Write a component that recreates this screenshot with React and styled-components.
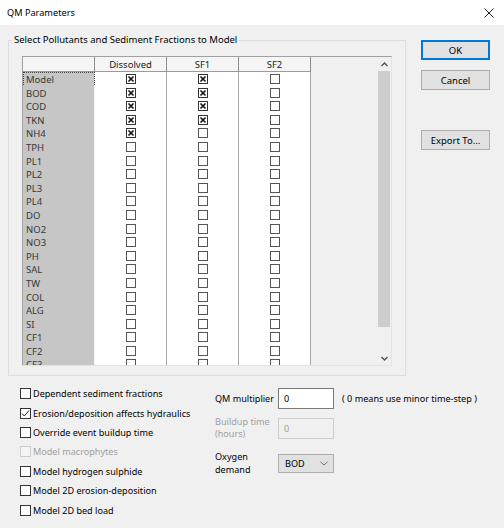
import React from "react";
import styled, { createGlobalStyle } from "styled-components";

const Global = createGlobalStyle`
  html, body { margin: 0; padding: 0; background: #f0f0f0; }
  body { font-family: "Noto Sans", "Open Sans", sans-serif; font-size: 9.5px; color: #000; }
  * { box-sizing: border-box; }
`;

const Window = styled.div`
  width: 504px;
  height: 528px;
  background: #f0f0f0;
  overflow: hidden;
  display: flex;
  flex-direction: column;
`;

const TitleBar = styled.div`
  height: 25px;
  flex: none;
  background: #ffffff;
  display: flex;
  align-items: center;
  justify-content: space-between;
  padding: 0 10px 0 7px;
`;

const Title = styled.span`
  font-size: 9.2px;
  color: #000;
`;

const Body = styled.div`
  display: flex;
  padding: 8px 0 0 8px;
`;

const Main = styled.div`
  width: 398px;
  flex: none;
  display: flex;
  flex-direction: column;
`;

const Group = styled.fieldset`
  margin: 0;
  min-width: 0;
  padding: 0 13px 9px 13px;
  border: 1px solid #dcdcdc;
`;

const Legend = styled.legend`
  padding: 0 2px;
  margin-left: -10px;
  line-height: 14px;
  color: #000;
`;

const GridFrame = styled.div`
  margin-top: 9px;
  height: 310px;
  display: flex;
  border-style: solid;
  border-width: 1px;
  border-color: #a0a0a0 #e3e3e3 #e3e3e3 #a0a0a0;
`;

const TableArea = styled.div`
  flex: 1;
  overflow: hidden;
  background: #f0f0f0;
`;

const Row = styled.div`
  display: grid;
  grid-template-columns: repeat(4, 72px);
  height: ${(p) => (p.$header ? "15px" : "13.6px")};
`;

const HeaderCell = styled.div`
  background: #f5f5f5;
  border-right: 1px solid #8c8c8c;
  border-bottom: 1px solid #9c9c88;
  display: flex;
  align-items: center;
  justify-content: center;
  padding-top: 1px;
  color: #222;
`;

const RowHead = styled.div`
  background: #c6c6c6;
  color: #383838;
  padding: 1px 0 0 3px;
  display: flex;
  align-items: center;
  border-bottom: 1px solid #e6e6e6;
  border-right: 1px solid #f4f4f4;
  outline: ${(p) => (p.$focus ? "1px dotted #444" : "none")};
  outline-offset: -1px;
`;

const DataCell = styled.div`
  background: #ffffff;
  border-right: 1px solid #a8a8a8;
  border-bottom: 1px solid #c4c4c4;
  display: flex;
  align-items: center;
  justify-content: center;
`;

const ScrollBar = styled.div`
  width: 14px;
  flex: none;
  display: flex;
  flex-direction: column;
  background: #f0f0f0;
`;

const Arrow = styled.div`
  height: 14px;
  flex: none;
  display: flex;
  align-items: center;
  justify-content: center;
`;

const Thumb = styled.div`
  height: 256px;
  flex: none;
  margin: 0 1px;
  background: #cdcdcd;
`;

const Track = styled.div`
  flex: 1;
`;

const Options = styled.div`
  display: flex;
  padding-left: 12px;
  margin-top: 8px;
  white-space: nowrap;
  font-size: 9.1px;
`;

const CheckList = styled.div`
  width: 195px;
  flex: none;
  display: flex;
  flex-direction: column;
`;

const CheckRow = styled.div`
  height: 19.4px;
  display: flex;
  align-items: center;
  gap: 2px;
  color: ${(p) => (p.$disabled ? "#a0a0a0" : "#000")};
`;

const Box = styled.span`
  width: 11px;
  height: 11px;
  flex: none;
  border: 1px solid ${(p) => (p.$disabled ? "#cccccc" : "#333333")};
  background: ${(p) => (p.$disabled ? "#f4f4f4" : "#ffffff")};
  display: flex;
  align-items: center;
  justify-content: center;
`;

const Fields = styled.div`
  flex: none;
  display: flex;
  flex-direction: column;
  margin-top: 4px;
`;

const FieldRow = styled.div`
  display: flex;
  align-items: center;
  margin-top: ${(p) => p.$mt || 0}px;
  color: ${(p) => (p.$disabled ? "#a0a0a0" : "#000")};
`;

const FieldLabel = styled.div`
  width: 63px;
  flex: none;
  line-height: ${(p) => p.$lh || 12}px;
`;

const TextInput = styled.div`
  width: 56px;
  height: 21px;
  flex: none;
  border: 1px solid ${(p) => (p.$disabled ? "#cccccc" : "#7a7a7a")};
  background: ${(p) => (p.$disabled ? "#f0f0f0" : "#ffffff")};
  color: ${(p) => (p.$disabled ? "#a0a0a0" : "#000")};
  padding-left: 5px;
  display: flex;
  align-items: center;
`;

const Note = styled.span`
  margin-left: 8px;
`;

const Select = styled.div`
  width: 56px;
  height: 19px;
  flex: none;
  background: #e1e1e1;
  border: 1px solid #adadad;
  padding: 0 5px 0 6px;
  display: flex;
  align-items: center;
  justify-content: space-between;
`;

const Buttons = styled.div`
  margin-left: 15px;
  padding-top: 7px;
  display: flex;
  flex-direction: column;
`;

const Button = styled.div`
  width: 69px;
  height: 20px;
  margin-top: ${(p) => p.$mt || 0}px;
  background: #e1e1e1;
  border: 1px solid ${(p) => (p.$default ? "#0078d7" : "#adadad")};
  box-shadow: ${(p) => (p.$default ? "inset 0 0 0 1px #0078d7" : "none")};
  display: flex;
  align-items: center;
  justify-content: center;
  color: #000;
`;

const rows = [
  "Model", "BOD", "COD", "TKN", "NH4", "TPH", "PL1", "PL2", "PL3", "PL4", "DO",
  "NO2", "NO3", "PH", "SAL", "TW", "COL", "ALG", "SI", "CF1", "CF2", "CF3",
];
const checked = {
  Model: [1, 1, 0],
  BOD: [1, 1, 0],
  COD: [1, 1, 0],
  TKN: [1, 1, 0],
  NH4: [1, 0, 0],
};

const GridCheck = ({ on }) => (
  <svg width="10" height="10" viewBox="0 0 10 10">
    <rect x="0.5" y="0.5" width="9" height="9" fill="#fff" stroke={on ? "#333" : "#555"} />
    {on && (
      <path d="M2.5 2.5 L7.5 7.5 M7.5 2.5 L2.5 7.5" stroke="#111" strokeWidth="1.6" />
    )}
  </svg>
);

const Chevron = ({ up }) => (
  <svg width="7" height="5" viewBox="0 0 7 5">
    <path
      d={up ? "M0.5 4 L3.5 1 L6.5 4" : "M0.5 1 L3.5 4 L6.5 1"}
      fill="none"
      stroke="#505050"
      strokeWidth="1.4"
    />
  </svg>
);

const options = [
  { label: "Dependent sediment fractions" },
  { label: "Erosion/deposition affects hydraulics", on: true },
  { label: "Override event buildup time" },
  { label: "Model macrophytes", disabled: true },
  { label: "Model hydrogen sulphide" },
  { label: "Model 2D erosion-deposition" },
  { label: "Model 2D bed load" },
];

export default function App() {
  return (
    <>
      <Global />
      <Window>
        <TitleBar>
          <Title>QM Parameters</Title>
          <svg width="10" height="10" viewBox="0 0 10 10">
            <path d="M0.5 0.5 L9.5 9.5 M9.5 0.5 L0.5 9.5" stroke="#222" strokeWidth="1" />
          </svg>
        </TitleBar>
        <Body>
          <Main>
            <Group>
              <Legend>Select Pollutants and Sediment Fractions to Model</Legend>
              <GridFrame>
                <TableArea>
                  <Row $header>
                    <HeaderCell />
                    <HeaderCell>Dissolved</HeaderCell>
                    <HeaderCell>SF1</HeaderCell>
                    <HeaderCell>SF2</HeaderCell>
                  </Row>
                  {rows.map((r, i) => (
                    <Row key={r}>
                      <RowHead $focus={i === 0}>{r}</RowHead>
                      {[0, 1, 2].map((c) => (
                        <DataCell key={c}>
                          <GridCheck on={!!(checked[r] && checked[r][c])} />
                        </DataCell>
                      ))}
                    </Row>
                  ))}
                </TableArea>
                <ScrollBar>
                  <Arrow>
                    <Chevron up />
                  </Arrow>
                  <Thumb />
                  <Track />
                  <Arrow>
                    <Chevron />
                  </Arrow>
                </ScrollBar>
              </GridFrame>
            </Group>
            <Options>
              <CheckList>
                {options.map((o) => (
                  <CheckRow key={o.label} $disabled={o.disabled}>
                    <Box $disabled={o.disabled}>
                      {o.on && (
                        <svg width="9" height="9" viewBox="0 0 9 9">
                          <path d="M1 4.5 L3.3 7 L8 1.5" fill="none" stroke="#222" strokeWidth="1" />
                        </svg>
                      )}
                    </Box>
                    <span>{o.label}</span>
                  </CheckRow>
                ))}
              </CheckList>
              <Fields>
                <FieldRow>
                  <FieldLabel>QM multiplier</FieldLabel>
                  <TextInput>0</TextInput>
                  <Note>( 0 means use minor time-step )</Note>
                </FieldRow>
                <FieldRow $mt={7} $disabled>
                  <FieldLabel>
                    Buildup time
                    <br />
                    (hours)
                  </FieldLabel>
                  <TextInput $disabled>0</TextInput>
                </FieldRow>
                <FieldRow $mt={10}>
                  <FieldLabel $lh={13}>
                    Oxygen
                    <br />
                    demand
                  </FieldLabel>
                  <Select>
                    <span>BOD</span>
                    <svg width="8" height="5" viewBox="0 0 8 5">
                      <path d="M0.5 0.8 L4 4 L7.5 0.8" fill="none" stroke="#707070" strokeWidth="1" />
                    </svg>
                  </Select>
                </FieldRow>
              </Fields>
            </Options>
          </Main>
          <Buttons>
            <Button $default>OK</Button>
            <Button $mt={10}>Cancel</Button>
            <Button $mt={40}>Export To...</Button>
          </Buttons>
        </Body>
      </Window>
    </>
  );
}
